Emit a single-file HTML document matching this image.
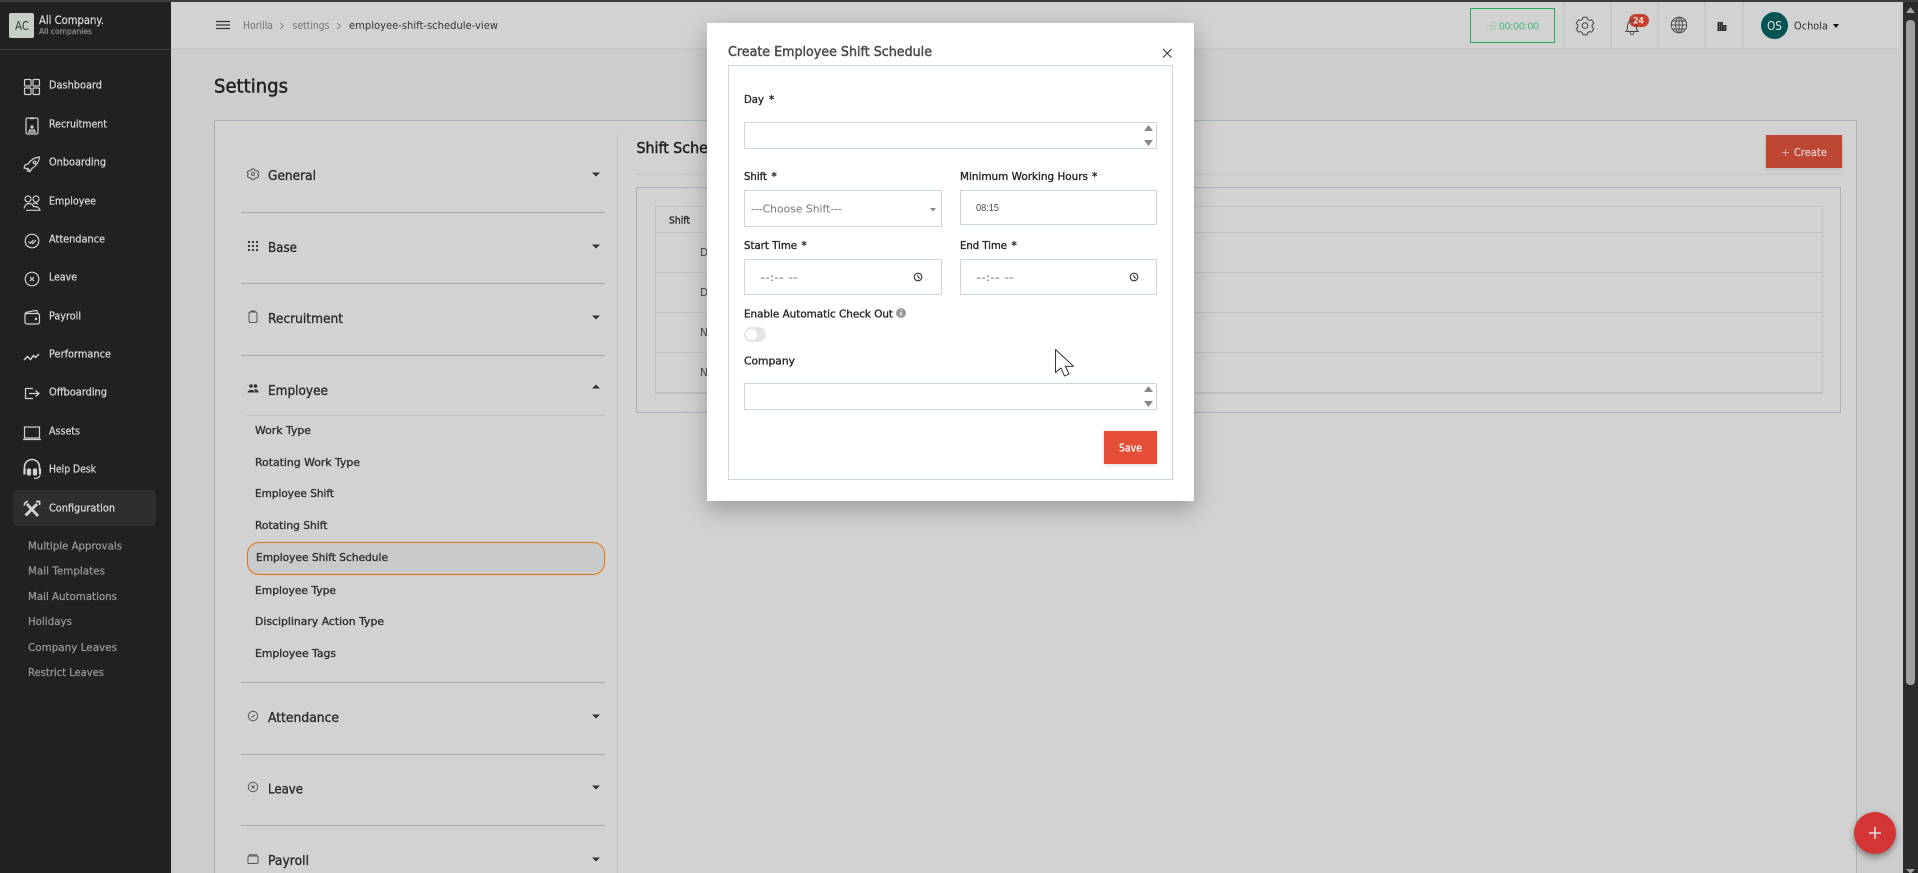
<!DOCTYPE html>
<html lang="en"><head><meta charset="utf-8"><title>Settings</title>
<style>
html,body{margin:0;padding:0;width:1918px;height:873px;overflow:hidden;background:#cdcdcd}
#p{position:relative;width:1918px;height:873px;overflow:hidden;font-family:"DejaVu Sans","Liberation Sans",sans-serif}
.a{position:absolute;box-sizing:border-box}
svg{position:absolute;left:0;top:0}
text{font-family:"DejaVu Sans","Liberation Sans",sans-serif;white-space:pre}
.m{stroke-width:.25px}
.sb{fill:#d8d8d8;stroke:#d8d8d8;font-size:10.5px}
.su{fill:#979797;stroke:#979797;font-size:10.5px}
.h{fill:#2a2a2a;stroke:#2a2a2a;font-size:13px}
.i{fill:#303030;stroke:#303030;font-size:11px}
.l{fill:#282828;stroke:#282828;font-size:10.5px}
.i.m,.l.m{stroke-width:.36px}
.h.m{stroke-width:.34px}
.s{stroke-width:.5px}
.d{font-family:"Liberation Sans",sans-serif}
.ic{fill:none;stroke:#d2d2d2;stroke-width:1.2}
.gi{fill:none;stroke:#555;stroke-width:1}
.f{background:#fff;border:1px solid #ccd5e2}
</style></head><body><div id="p">
<!-- base layers -->
<div class="a" style="left:0;top:0;width:1918px;height:2px;background:#3c3c40"></div>
<div class="a" style="left:171px;top:2px;width:1729px;height:46px;background:#d2d2d2"></div>
<div class="a" style="left:171px;top:48px;width:1729px;height:2px;background:#c8c8c8"></div>
<div class="a" style="left:0;top:2px;width:171px;height:871px;background:#212121"></div>
<div class="a" style="left:0;top:49px;width:171px;height:1px;background:#404040"></div>
<div class="a" style="left:9px;top:13px;width:25px;height:25px;background:#c5cfc5;border-radius:2px"></div>
<div class="a" style="left:13px;top:490px;width:143px;height:36px;background:#2e2e2e;border-radius:4px"></div>
<!-- topbar dividers -->
<div class="a" style="left:1563px;top:2px;width:1.5px;height:46px;background:#c8c8c8"></div>
<div class="a" style="left:1610px;top:2px;width:1.5px;height:46px;background:#c8c8c8"></div>
<div class="a" style="left:1657px;top:2px;width:1.5px;height:46px;background:#c8c8c8"></div>
<div class="a" style="left:1704px;top:2px;width:1.5px;height:46px;background:#c8c8c8"></div>
<div class="a" style="left:1742px;top:2px;width:1.5px;height:46px;background:#c8c8c8"></div>
<div class="a" style="left:1470px;top:8px;width:85px;height:35px;border:1px solid #1fae5e"></div>
<div class="a" style="left:1761px;top:12px;width:27px;height:27px;border-radius:50%;background:#045454"></div>
<div class="a" style="left:1629px;top:14px;width:20px;height:12.5px;border-radius:7px;background:#c8402f"></div>
<!-- main card -->
<div class="a" style="left:214px;top:120px;width:1643px;height:760px;background:#d2d2d2;border:1px solid #a9b1ba"></div>
<div class="a" style="left:617px;top:135px;width:1px;height:738px;background:#bfc2c4"></div>
<div class="a" style="left:241px;top:212px;width:364px;height:1px;background:#a5a7a9"></div>
<div class="a" style="left:241px;top:283px;width:364px;height:1px;background:#a5a7a9"></div>
<div class="a" style="left:241px;top:355px;width:364px;height:1px;background:#a5a7a9"></div>
<div class="a" style="left:247px;top:415px;width:358px;height:1px;background:#bdbfc0"></div>
<div class="a" style="left:241px;top:682px;width:364px;height:1px;background:#a5a7a9"></div>
<div class="a" style="left:241px;top:754px;width:364px;height:1px;background:#a5a7a9"></div>
<div class="a" style="left:241px;top:825px;width:364px;height:1px;background:#a5a7a9"></div>
<div class="a" style="left:247px;top:542px;width:358px;height:33px;background:#c9cacc;border:1px solid #dd7310;border-radius:12px"></div>
<!-- right panel -->
<div class="a" style="left:636px;top:174px;width:1206px;height:1px;background:#c4c4c4"></div>
<div class="a" style="left:636px;top:187px;width:1205px;height:226px;border:1px solid #a9b1ba"></div>
<div class="a" style="left:655px;top:206px;width:1168px;height:188px;border:1px solid #c0c0c0;border-bottom-width:2px"></div>
<div class="a" style="left:655px;top:232px;width:1168px;height:1px;background:#c0c0c0"></div>
<div class="a" style="left:655px;top:272px;width:1168px;height:1px;background:#c0c0c0"></div>
<div class="a" style="left:655px;top:312px;width:1168px;height:1px;background:#c0c0c0"></div>
<div class="a" style="left:655px;top:352px;width:1168px;height:1px;background:#c0c0c0"></div>
<div class="a" style="left:1766px;top:135px;width:76px;height:33px;background:#bd4733;box-shadow:0 1px 4px rgba(0,0,0,.12)"></div>
<!-- scrollbar -->
<div class="a" style="left:1903px;top:2px;width:15px;height:871px;background:#2b2b2b"></div>
<div class="a" style="left:1906px;top:20px;width:9px;height:665px;background:#9f9f9f;border-radius:4px"></div>
<!-- FAB -->
<div class="a" style="left:1854px;top:812px;width:42px;height:42px;border-radius:50%;background:#d33434;box-shadow:0 3px 7px rgba(0,0,0,.4)"></div>

<svg width="1918" height="873" viewBox="0 0 1918 873">
<!-- scrollbar arrows -->
<path d="M1910.5 7l4.5 6h-9z" fill="#a0a0a0"/><path d="M1906 869h9l-4.500 5z" fill="#a0a0a0"/>
<!-- FAB plus -->
<path d="M1875 827v12M1869 833h12" stroke="#dcdcdc" stroke-width="1.6"/>
<!-- brand -->
<text x="15" y="30" font-size="12.5" fill="#333" textLength="14" lengthAdjust="spacingAndGlyphs">AC</text>
<text class="m" x="39" y="24" font-size="11.5" fill="#d8d8d8" stroke="#d8d8d8" textLength="65" lengthAdjust="spacingAndGlyphs">All Company.</text>
<text class="m" x="39" y="34" font-size="8" fill="#8a8a8a" stroke="#8a8a8a" textLength="53" lengthAdjust="spacingAndGlyphs">All companies</text>
<!-- sidebar text -->
<text class="sb m" x="49" y="88.5" textLength="53" lengthAdjust="spacingAndGlyphs">Dashboard</text>
<text class="sb m" x="49" y="127.5" textLength="58" lengthAdjust="spacingAndGlyphs">Recruitment</text>
<text class="sb m" x="49" y="165.5" textLength="57" lengthAdjust="spacingAndGlyphs">Onboarding</text>
<text class="sb m" x="49" y="204.5" textLength="47" lengthAdjust="spacingAndGlyphs">Employee</text>
<text class="sb m" x="49" y="242.5" textLength="56" lengthAdjust="spacingAndGlyphs">Attendance</text>
<text class="sb m" x="49" y="280.5" textLength="28" lengthAdjust="spacingAndGlyphs">Leave</text>
<text class="sb m" x="49" y="319.5" textLength="32" lengthAdjust="spacingAndGlyphs">Payroll</text>
<text class="sb m" x="49" y="357.5" textLength="62" lengthAdjust="spacingAndGlyphs">Performance</text>
<text class="sb m" x="49" y="395.5" textLength="58" lengthAdjust="spacingAndGlyphs">Offboarding</text>
<text class="sb m" x="49" y="434.5" textLength="31" lengthAdjust="spacingAndGlyphs">Assets</text>
<text class="sb m" x="49" y="472.5" textLength="47" lengthAdjust="spacingAndGlyphs">Help Desk</text>
<text class="sb m" x="49" y="511.5" textLength="66" lengthAdjust="spacingAndGlyphs">Configuration</text>
<text class="su m" x="28" y="549.5" textLength="94" lengthAdjust="spacingAndGlyphs">Multiple Approvals</text>
<text class="su m" x="28" y="574.5" textLength="77" lengthAdjust="spacingAndGlyphs">Mail Templates</text>
<text class="su m" x="28" y="600" textLength="89" lengthAdjust="spacingAndGlyphs">Mail Automations</text>
<text class="su m" x="28" y="625" textLength="44" lengthAdjust="spacingAndGlyphs">Holidays</text>
<text class="su m" x="28" y="651" textLength="89" lengthAdjust="spacingAndGlyphs">Company Leaves</text>
<text class="su m" x="28" y="676" textLength="76" lengthAdjust="spacingAndGlyphs">Restrict Leaves</text>
<!-- sidebar icons -->
<g class="ic">
<rect x="24.5" y="79.5" width="6.5" height="6.5" rx="1"/><rect x="33" y="79.5" width="6.5" height="6.5" rx="1"/><rect x="24.5" y="88" width="6.5" height="6.5" rx="1"/><rect x="33" y="88" width="6.5" height="6.5" rx="1"/>
<rect x="26" y="118" width="12" height="16" rx="1.5"/><path d="M30 118.500h4M28 132h8"/><circle cx="32" cy="127" r="1" fill="#d2d2d2"/><path d="M29.500 132v-2h5v2"/>
<path d="M39.500 157c-5 .5-9 3-11.500 7l-3 1-1 3 3 .5 .5 2.500 2 .5 .5 0 2-3c4-2.500 7-6.500 7.500-11.500z"/><circle cx="34.500" cy="162.500" r="1.300"/><path d="M27.500 168l3 3"/>
<circle cx="28" cy="199" r="3"/><circle cx="36" cy="199" r="3"/><path d="M24 208.500c.5-3 2.500-5 5-5s4 1.500 4.500 3h1c2.500 0 5 1.500 5.500 3.800H26"/><path d="M33 203.500c2-.5 4-.5 5 1"/>
<circle cx="32" cy="241" r="6.800"/><path d="M28.500 241.500l1.800 1.800 3-3.300M31.800 242.500l1 1 3.200-3.500"/>
<circle cx="32" cy="279" r="6.800"/><path d="M30 277l4 4M34 277l-4 4"/>
<path d="M25 314.500c0-1 .5-1.800 1.500-2.200l9-1.800c1-.2 1.800 .4 1.800 1.500v1.500"/><rect x="25" y="313.500" width="14.500" height="10.500" rx="1.800"/><circle cx="36" cy="319" r=".6" fill="#d2d2d2"/>
<path d="M24 360l3.500-3.500 3 3 3-4 2 2 3.500-3.500" stroke-width="1.500"/>
<path d="M33 388.500h-7.500v10H33M29 393.500h9M35.500 390.500l3.500 3-3.500 3"/>
<rect x="24.500" y="427" width="15" height="11"/><path d="M23 439.500h18"/>
<path d="M24.500 470v-3a7.500 7.500 0 0 1 15 0v3" stroke-width="1.600"/><path d="M24.500 468.500v6M40 468.500v5.500" stroke-width="2.200"/><rect x="27.500" y="469" width="3" height="6" rx="1.200" fill="#d2d2d2"/><rect x="33.500" y="469" width="3" height="6" rx="1.200" fill="#d2d2d2"/><path d="M40 474.500c0 3-3 4-6 4"/>
<path d="M27 504l11 12" stroke-width="2.800"/><path d="M37 504l-11.500 11.500" stroke-width="3"/><path d="M24.500 505.500a3.500 3.500 0 0 1 3.500-4" stroke-width="1.800"/><path d="M36 501.500h3.500v3.500" stroke-width="1.800"/>
</g>
<!-- topbar -->
<path d="M216 21.500h14M216 25h14M216 28.500h14" stroke="#333" stroke-width="1.200"/>
<text x="243" y="29" font-size="10.500" fill="#757575" textLength="30" lengthAdjust="spacingAndGlyphs">Horilla</text>
<path d="M280 23l3.500 3-3.500 3M337 23l3.500 3-3.500 3" fill="none" stroke="#7d7d7d" stroke-width=".9"/>
<text x="292.500" y="29" font-size="10.500" fill="#757575" textLength="37" lengthAdjust="spacingAndGlyphs">settings</text>
<text x="349" y="29" font-size="10.500" fill="#343434" textLength="149" lengthAdjust="spacingAndGlyphs">employee-shift-schedule-view</text>
<path d="M1490 22.500h5v7h-5M1487 26h5.500M1490.500 24l2 2-2 2" fill="none" stroke="#9ccfae" stroke-width="1"/>
<text class="d" x="1499" y="29.500" font-size="10.500" fill="#3db873" textLength="40" lengthAdjust="spacingAndGlyphs">00:00:00</text>
<g fill="none" stroke="#444" stroke-width="1">
<path d="M1583 17.200h4l.7 2.200 1.700 1 2.300-.5 2 3.400-1.600 1.700v2l1.600 1.700-2 3.400-2.300-.5-1.700 1-.7 2.200h-4l-.7-2.200-1.700-1-2.300 .5-2-3.400 1.600-1.700v-2l-1.600-1.700 2-3.400 2.300 .5 1.700-1z"/><circle cx="1585" cy="25.600" r="2.800"/>
<path d="M1626 31.500c1.500-1.500 1.500-3 1.500-5.500 0-3 2-5.500 4.500-5.500s4.500 2.500 4.500 5.500c0 2.500 0 4 1.500 5.500zM1630 32c0 1.500 1 2.500 2 2.500s2-1 2-2.500"/>
<g stroke="#505050"><circle cx="1679" cy="25" r="7.800"/><ellipse cx="1679" cy="25" rx="3.500" ry="7.800"/><path d="M1679 17.200v15.600M1671.200 25h15.600M1672.500 21h13M1672.500 29h13"/></g>
</g>
<path d="M1717.500 22h5.500v3h3.500v6h-9z" fill="#2f2f2f"/><path d="M1719 24h1M1721 24h1M1719 26.500h1M1721 26.500h1M1719 29h1M1721 29h1M1724 27h1M1724 29h1" stroke="#9a9a9a" stroke-width="1"/>
<text x="1633" y="23.500" font-weight="700" font-size="9" fill="#f0dcd8" textLength="11" lengthAdjust="spacingAndGlyphs">24</text>
<text x="1767" y="30" font-size="12" fill="#e5e5e5" textLength="15" lengthAdjust="spacingAndGlyphs">OS</text>
<text x="1794" y="29.500" font-size="10.500" fill="#333" textLength="34" lengthAdjust="spacingAndGlyphs">Ochola</text>
<path d="M1833 24h6l-3 4z" fill="#111"/>
<!-- title -->
<text class="s" x="214" y="92.500" font-size="19" fill="#222" stroke="#222" textLength="74" lengthAdjust="spacingAndGlyphs">Settings</text>
<!-- accordion headings -->
<text class="h m" x="268" y="180" textLength="48" lengthAdjust="spacingAndGlyphs">General</text>
<text class="h m" x="268" y="252" textLength="29" lengthAdjust="spacingAndGlyphs">Base</text>
<text class="h m" x="268" y="323" textLength="75" lengthAdjust="spacingAndGlyphs">Recruitment</text>
<text class="h m" x="268" y="395" textLength="60" lengthAdjust="spacingAndGlyphs">Employee</text>
<text class="h m" x="268" y="722" textLength="71" lengthAdjust="spacingAndGlyphs">Attendance</text>
<text class="h m" x="268" y="793.500" textLength="35" lengthAdjust="spacingAndGlyphs">Leave</text>
<text class="h m" x="268" y="865" textLength="41" lengthAdjust="spacingAndGlyphs">Payroll</text>
<!-- accordion icons -->
<g class="gi">
<path d="M251.500 169h3l.5 1.300 1.300 .6 1.300-.3 1.200 2-.9 1v1.200l.9 1-1.200 2-1.300-.3-1.300 .6-.5 1.300h-3l-.5-1.300-1.300-.6-1.300 .3-1.200-2 .9-1v-1.200l-.9-1 1.200-2 1.300 .3 1.300-.6z" transform="translate(0 0)"/><circle cx="253" cy="174" r="1.600"/>
<rect x="249" y="312" width="8" height="10.500" rx="1.500"/><path d="M251 312v-1h4v1"/>
<circle cx="253" cy="716" r="4.700"/><path d="M251 717l2 -.2 2-2"/>
<circle cx="253" cy="787" r="4.700"/><path d="M251.500 785.500l3 3M254.500 785.500l-3 3"/>
<rect x="248" y="856" width="10" height="7.500" rx="1"/><path d="M248.500 856.500l1-1.700h7l1 1.700"/>
</g>
<g fill="#333">
<circle cx="249" cy="242" r="1.150"/><circle cx="253" cy="242" r="1.150"/><circle cx="257" cy="242" r="1.150"/><circle cx="249" cy="246" r="1.150"/><circle cx="253" cy="246" r="1.150"/><circle cx="257" cy="246" r="1.150"/><circle cx="249" cy="250" r="1.150"/><circle cx="253" cy="250" r="1.150"/><circle cx="257" cy="250" r="1.150"/>
<circle cx="251" cy="386" r="1.800"/><circle cx="255.500" cy="386" r="1.800"/><path d="M247.500 392.500c0-3 7-4 7 0zM255 392.500c0-1.500-.5-2.500-1-3 2.500-.8 4.500 .5 4.500 3z"/>
<!-- carets -->
<path d="M592 172.500h8l-4 4zM592 244.500h8l-4 4zM592 315.500h8l-4 4zM592 388.500h8l-4-4zM592 714.500h8l-4 4zM592 785.500h8l-4 4zM592 857.500h8l-4 4z"/>
</g>
<!-- employee sub-items -->
<text class="i m" x="255" y="434" textLength="56" lengthAdjust="spacingAndGlyphs">Work Type</text>
<text class="i m" x="255" y="466" textLength="105" lengthAdjust="spacingAndGlyphs">Rotating Work Type</text>
<text class="i m" x="255" y="497" textLength="79" lengthAdjust="spacingAndGlyphs">Employee Shift</text>
<text class="i m" x="255" y="529" textLength="72.500" lengthAdjust="spacingAndGlyphs">Rotating Shift</text>
<text class="i m" x="256" y="561" textLength="132" lengthAdjust="spacingAndGlyphs">Employee Shift Schedule</text>
<text class="i m" x="255" y="594" textLength="81" lengthAdjust="spacingAndGlyphs">Employee Type</text>
<text class="i m" x="255" y="625" textLength="129" lengthAdjust="spacingAndGlyphs">Disciplinary Action Type</text>
<text class="i m" x="255" y="657" textLength="81" lengthAdjust="spacingAndGlyphs">Employee Tags</text>
<!-- right panel text -->
<text class="s" x="636.500" y="153" font-size="15" fill="#222" stroke="#222" textLength="102" lengthAdjust="spacingAndGlyphs">Shift Schedule</text>
<text class="m" x="669" y="223.500" font-size="10" fill="#2a2a2a" stroke="#2a2a2a" style="stroke-width:.4px" textLength="21" lengthAdjust="spacingAndGlyphs">Shift</text>
<text x="700" y="256" font-size="10.500" fill="#4a4a4a">D</text>
<text x="700" y="296" font-size="10.500" fill="#4a4a4a">D</text>
<text x="700" y="336" font-size="10.500" fill="#4a4a4a">N</text>
<text x="700" y="376" font-size="10.500" fill="#4a4a4a">N</text>
<path d="M1785.500 149v7M1782 152.500h7" stroke="#d9a99f" stroke-width=".9"/>
<text class="m" x="1794" y="156" font-size="11" fill="#e3cbc6" stroke="#e3cbc6" textLength="33" lengthAdjust="spacingAndGlyphs">Create</text>
</svg>

<!-- modal -->
<div class="a" style="left:707px;top:23px;width:487px;height:478px;background:#fff;box-shadow:0 8px 22px rgba(0,0,0,.28)"></div>
<div class="a" style="left:728px;top:65px;width:445px;height:415px;border:1px solid #ccd5e2"></div>
<div class="a f" style="left:744px;top:122px;width:413px;height:27px"></div>
<div class="a f" style="left:744px;top:190px;width:198px;height:37px"></div>
<div class="a f" style="left:960px;top:190px;width:197px;height:35px"></div>
<div class="a f" style="left:744px;top:259px;width:198px;height:36px"></div>
<div class="a f" style="left:960px;top:259px;width:197px;height:36px"></div>
<div class="a f" style="left:744px;top:383px;width:413px;height:27px"></div>
<div class="a" style="left:744px;top:327px;width:22px;height:15px;border-radius:8px;background:#e4e5e7"></div>
<div class="a" style="left:746px;top:329px;width:11px;height:11px;border-radius:50%;background:#fff"></div>
<div class="a" style="left:1104px;top:431px;width:53px;height:33px;background:#e54f38;box-shadow:0 1px 4px rgba(0,0,0,.15)"></div>
<svg width="1918" height="873" viewBox="0 0 1918 873">
<text class="s" x="728" y="56" font-size="13.500" fill="#4d4d4d" stroke="#4d4d4d" textLength="204" lengthAdjust="spacingAndGlyphs">Create Employee Shift Schedule</text>
<path d="M1163 49l8.500 8.500M1171.500 49l-8.500 8.500" stroke="#333" stroke-width="1"/>
<text class="l m" x="744" y="103" textLength="20" lengthAdjust="spacingAndGlyphs">Day</text><text class="l m" x="769" y="103">*</text>
<text class="l m" x="744" y="180" textLength="23" lengthAdjust="spacingAndGlyphs">Shift</text><text class="l m" x="771.500" y="180">*</text>
<text class="l m" x="960" y="180" textLength="128" lengthAdjust="spacingAndGlyphs">Minimum Working Hours</text><text class="l m" x="1092" y="180">*</text>
<text class="l m" x="744" y="249" textLength="53" lengthAdjust="spacingAndGlyphs">Start Time</text><text class="l m" x="801.500" y="249">*</text>
<text class="l m" x="960" y="249" textLength="47" lengthAdjust="spacingAndGlyphs">End Time</text><text class="l m" x="1011.500" y="249">*</text>
<text class="l m" x="744" y="317.500" textLength="149" lengthAdjust="spacingAndGlyphs">Enable Automatic Check Out</text>
<text class="l m" x="744" y="364.500" textLength="51" lengthAdjust="spacingAndGlyphs">Company</text>
<text x="751" y="212.500" font-size="10.500" fill="#777" textLength="91" lengthAdjust="spacingAndGlyphs">---Choose Shift---</text>
<text class="d" x="976" y="211" font-size="10.500" fill="#444" textLength="23" lengthAdjust="spacingAndGlyphs">08:15</text>
<text x="760" y="281" font-size="10.500" fill="#666" textLength="38" lengthAdjust="spacingAndGlyphs">--:-- --</text>
<text x="976" y="281" font-size="10.500" fill="#666" textLength="38" lengthAdjust="spacingAndGlyphs">--:-- --</text>
<g fill="#888">
<path d="M1148.500 125l4.500 6h-9zM1144 140h9l-4.500 6zM1148.500 386l4.500 6h-9zM1144 401h9l-4.500 6z"/>
<path d="M930 208h6l-3 3.500z"/>
</g>
<g fill="none" stroke="#333" stroke-width="1.100">
<circle cx="918" cy="277" r="3.800"/><path d="M917.500 275l.8 2 1.500 1.500"/>
<circle cx="1134" cy="277" r="3.800"/><path d="M1133.500 275l.8 2 1.500 1.500"/>
</g>
<circle cx="901" cy="313" r="5" fill="#999"/><path d="M901 312v3.500" stroke="#fff" stroke-width="1.200"/><circle cx="901" cy="310" r=".7" fill="#fff"/>
<text class="m" x="1119" y="451.500" font-size="10.500" fill="#fff" stroke="#fff" textLength="23" lengthAdjust="spacingAndGlyphs">Save</text>
<path d="M1055.500 349.500v23l5.500-4.500 3.500 8 4.500-2-3.500-7.500 8-.3z" fill="#fff" stroke="#222" stroke-width=".9" stroke-linejoin="round"/>
</svg>
</div></body></html>
